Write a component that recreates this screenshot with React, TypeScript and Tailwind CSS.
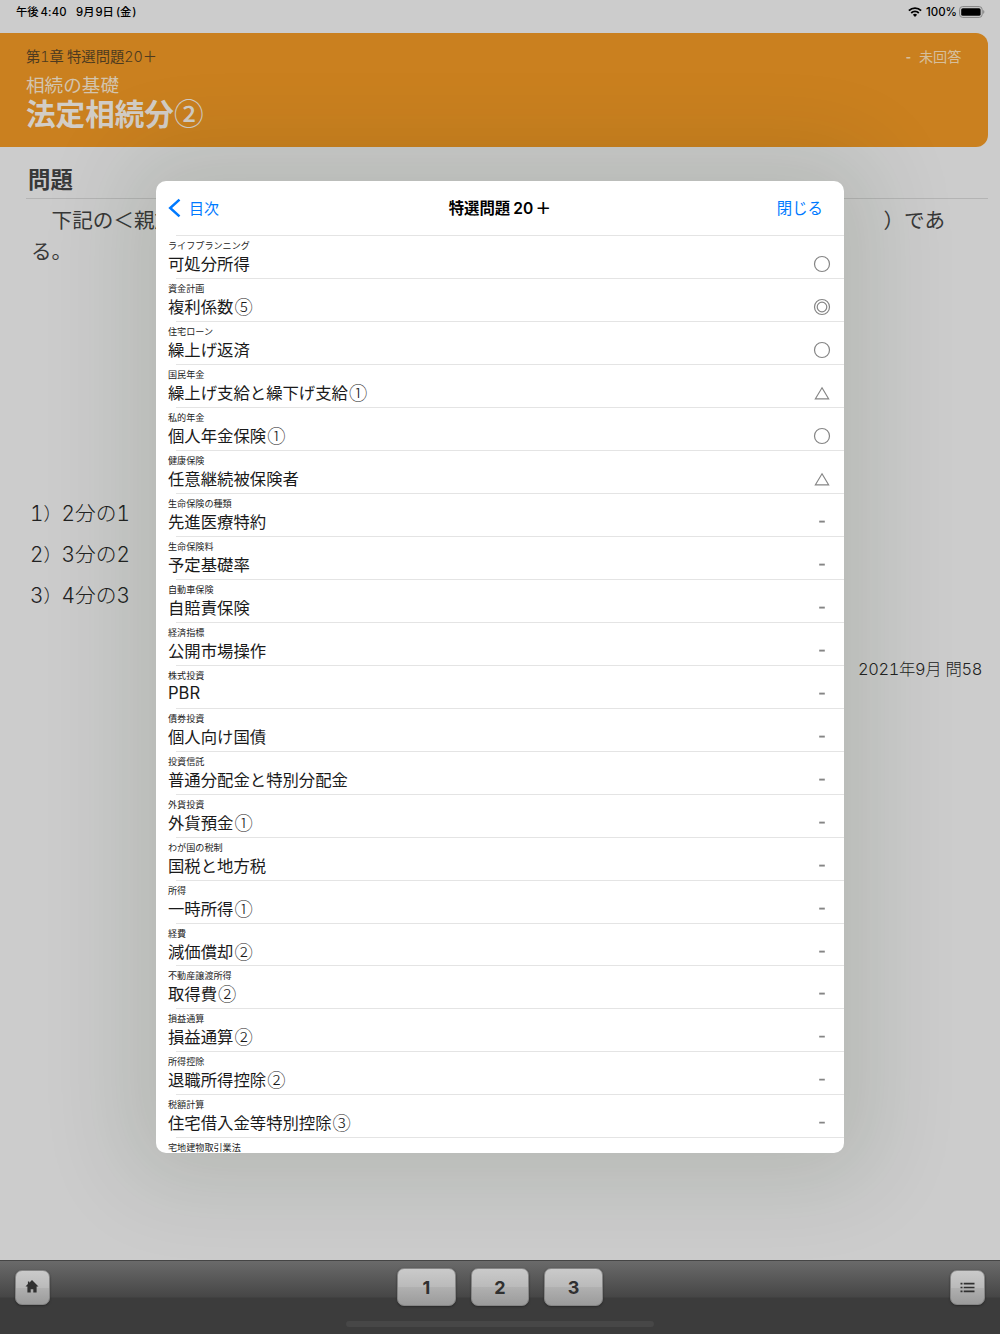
import React from 'react'
import clsx from 'clsx'

type Mark = 'good' | 'great' | 'fair' | 'none'

const rows: { category: string; title: string; no?: string; mark: Mark }[] = [
  { category: "ライフプランニング", title: "可処分所得", mark: "good" },
  { category: "資金計画", title: "複利係数", no: "⑤", mark: "great" },
  { category: "住宅ローン", title: "繰上げ返済", mark: "good" },
  { category: "国民年金", title: "繰上げ支給と繰下げ支給", no: "①", mark: "fair" },
  { category: "私的年金", title: "個人年金保険", no: "①", mark: "good" },
  { category: "健康保険", title: "任意継続被保険者", mark: "fair" },
  { category: "生命保険の種類", title: "先進医療特約", mark: "none" },
  { category: "生命保険料", title: "予定基礎率", mark: "none" },
  { category: "自動車保険", title: "自賠責保険", mark: "none" },
  { category: "経済指標", title: "公開市場操作", mark: "none" },
  { category: "株式投資", title: "PBR", mark: "none" },
  { category: "債券投資", title: "個人向け国債", mark: "none" },
  { category: "投資信託", title: "普通分配金と特別分配金", mark: "none" },
  { category: "外貨投資", title: "外貨預金", no: "①", mark: "none" },
  { category: "わが国の税制", title: "国税と地方税", mark: "none" },
  { category: "所得", title: "一時所得", no: "①", mark: "none" },
  { category: "経費", title: "減価償却", no: "②", mark: "none" },
  { category: "不動産譲渡所得", title: "取得費", no: "②", mark: "none" },
  { category: "損益通算", title: "損益通算", no: "②", mark: "none" },
  { category: "所得控除", title: "退職所得控除", no: "②", mark: "none" },
  { category: "税額計算", title: "住宅借入金等特別控除", no: "③", mark: "none" },
  { category: "宅地建物取引業法", title: "", mark: "none" },
];

function MarkIcon({ mark }: { mark: Mark }) {
  return (
    <svg className="h-[18px] w-[18px] shrink-0" viewBox="0 0 18 18" fill="none" stroke="#858585" strokeWidth="1.2">
      {(mark === 'good' || mark === 'great') && <circle cx="9" cy="9" r="7.5" />}
      {mark === 'great' && <circle cx="9" cy="9" r="4.8" />}
      {mark === 'fair' && <path d="M9 3.8L15.6 14.8H2.4Z" />}
      {mark === 'none' && <path d="M6.2 8.6H11.8" strokeWidth="1.9" />}
    </svg>
  );
}

function StatusBar() {
  return (
    <div className="flex h-[33px] items-start justify-between pl-4 pr-[15px] pt-[3px] text-[11.3px] leading-[17px] font-medium text-black">
      <div className="flex gap-[10px] whitespace-pre">
        <span className="w-[50px]">午後<span className="ml-[2px] font-['Inter'] tracking-[0.1px]">4:40</span></span>
        <span><span className="font-['Inter']">9</span>月<span className="ml-px font-['Inter']">9</span>日<span className="ml-[2px] font-['Inter']">(</span>金<span className="ml-px font-['Inter']">)</span></span>
      </div>
      <div className="flex items-center">
        <svg className="h-[10px] w-[14px]" viewBox="0 0 14 10">
          <path d="M0.9 3.6a8.7 8.7 0 0 1 12.2 0" fill="none" stroke="#000" strokeWidth="1.9" />
          <path d="M3.2 6a5.4 5.4 0 0 1 7.6 0" fill="none" stroke="#000" strokeWidth="1.8" />
          <path d="M7 10L4.9 7.8a3 3 0 0 1 4.2 0Z" />
        </svg>
        <span className="ml-[4px] pt-px font-['Inter'] text-[11.5px]">100%</span>
        <svg className="ml-[2px] h-[12px] w-[26px]" viewBox="0 0 26 12">
          <rect x="0.6" y="0.6" width="22.6" height="10.8" rx="3" fill="none" stroke="#858585" />
          <rect x="2.2" y="2.2" width="19.4" height="7.6" rx="1.6" />
          <path d="M24.2 4.1c1.6 .6 1.6 3.2 0 3.8Z" fill="#858585" />
        </svg>
      </div>
    </div>
  );
}

function ToolButton({ children, className }: { children: React.ReactNode; className?: string }) {
  return (
    <button className={clsx("flex items-center justify-center rounded-[7px] border border-[#858585] bg-[linear-gradient(#cacaca_0%,#bababa_50%,#b0b0b0_51%,#9b9b9b_100%)] text-[#303030] shadow-[0_1px_2px_#2a2a2a]", className)}>
      {children}
    </button>
  );
}

function Toolbar() {
  return (
    <div className="relative flex h-[74px] justify-between border-t border-[#454545] bg-[linear-gradient(#6a6a6a_0,#464646_36px,#3c3c3c_37px,#3c3c3c_100%)] px-[15px]">
      <ToolButton className="mt-[9px] h-[35px] w-[35px] pb-[2px] pr-px">
        <svg className="h-[13px] w-[14px]" viewBox="0 0 14 13" fill="currentColor">
          <path d="M7 0L13.5 6.4H11.6V12.4H8.3V9.2H5.7V12.4H2.4V6.4H0.5L2.9 4V1.4H4.3V2.7Z" />
        </svg>
      </ToolButton>
      <div className="mt-[7px] flex gap-[15px] font-['Inter'] text-[18px] font-bold">
        {[1, 2, 3].map(n => (
          <ToolButton key={n} className="h-[38px] w-[58.5px]">{n}</ToolButton>
        ))}
      </div>
      <ToolButton className="mt-[9px] h-[35px] w-[35px]">
        <svg className="h-[11px] w-[15px]" viewBox="0 0 15 11" stroke="currentColor" strokeWidth="1.7">
          <path d="M0.5 1.6H2.5M3.7 1.6H14.5M0.5 5.5H2.5M3.7 5.5H14.5M0.5 9.4H2.5M3.7 9.4H14.5" />
        </svg>
      </ToolButton>
      {/* home indicator */}
      <div className="absolute bottom-[7px] left-[346px] h-[6px] w-[308px] rounded-full bg-[#474747]" />
    </div>
  );
}

function ListModal() {
  return (
    <div className="absolute left-[156px] top-[181px] flex h-[972px] w-[688px] flex-col overflow-hidden rounded-[10px] bg-white shadow-[0_0_90px_28px_rgba(20,40,10,0.12)]">
      <div className="grid h-[54px] shrink-0 grid-cols-3 items-center pl-3 pr-[21px] text-[15px] text-[#007aff]">
        <div className="flex items-center gap-[8px]">
          <svg className="h-[20px] w-[13px]" viewBox="0 0 13 20" fill="none" stroke="currentColor" strokeWidth="2.5">
            <path d="M11.5 1.6L2.2 10L11.5 18.4" />
          </svg>
          <span>目次</span>
        </div>
        <h2 className="whitespace-nowrap pb-px pl-[9px] text-center text-[15.4px] font-bold text-black">特選問題<span className="ml-[3px] font-['Inter'] text-[15.6px] font-semibold">20</span><span className="ml-[2px] text-[16px]">＋</span></h2>
        <div className="text-right text-[15.4px]">閉じる</div>
      </div>
      <ul>
        {rows.map((row, index) => (
          <li key={index} className="h-[42.97px]">
            <div className="ml-[20px] h-px bg-[#e4e4e4]" />
            <div className="flex justify-between pl-3 pr-[13px]">
              <div className="whitespace-nowrap pt-[3px]">
                <div className="text-[9.1px] leading-[13px] text-[#222]">{row.category}</div>
                <div className={clsx("flex h-[22px] items-center leading-[22px] text-[#1a1a1a]", row.title === "PBR" ? "pt-px font-['Inter'] text-[16.6px]" : "text-[16.38px]")}>
                  {row.title}
                  {row.no && <span className="ml-px text-[18.3px] font-light">{row.no}</span>}
                </div>
              </div>
              <div className="pt-[19px]"><MarkIcon mark={row.mark} /></div>
            </div>
          </li>
        ))}
      </ul>
    </div>
  );
}

function App() {
  return (
    <div className="relative flex h-[1334px] w-[1000px] flex-col overflow-hidden bg-[#cccccc] font-['Noto_Sans_CJK_JP',sans-serif] text-[#383838]">
      <StatusBar />
      <header className="mr-[12.5px] flex h-[114px] justify-between rounded-r-[12px] bg-[#ca801f] pl-[26px] pr-[26px] pt-[13px]">
        <div>
          <div className="text-[14.3px] leading-[20px] text-[#4d3a20]">第<span className="font-['Inter'] font-light tabular-nums">1</span>章 特選問題<span className="font-['Inter'] font-light tabular-nums">20</span>＋</div>
          <div className="mt-[5px] text-[18.6px] leading-[24px] text-[#d3c4ae]">相続の基礎</div>
          <h1 className="text-[29.6px] leading-[34px] font-bold text-[#d2cdc6]">法定相続分<span className="font-medium">②</span></h1>
        </div>
        <div className="flex gap-[8px] text-[14.2px] leading-[20px] text-[#d6bf9c]"><span className="font-bold">-</span><span>未回答</span></div>
      </header>
      <main className="flex-1">
        <h2 className="ml-[26px] mr-3 h-[52px] border-b border-[#b4b4b4] pl-[2px] pt-[16px] text-[22.4px] leading-[30px] font-bold">問題</h2>
        <div className="flex justify-between pl-[31px] pr-[55px] pt-[5px] text-[20.6px] leading-[31px]">
          <p className="whitespace-nowrap">　下記の＜親族<br />る。</p>
          <p>）であ</p>
        </div>
        <ol className="mt-[227px] flex flex-col pl-[30px] font-['Inter','Noto_Sans_CJK_JP'] text-[20.8px] leading-[41px] tabular-nums">
          {["2分の1", "3分の2", "4分の3"].map((choice, index) => (
            <li key={index} className="flex whitespace-nowrap font-light text-[#222]">
              <span>{index + 1}</span><span className="text-[18px]">）</span><span>{choice}</span>
            </li>
          ))}
        </ol>
        <p className="mr-[18px] mt-[43px] text-right font-['Inter','Noto_Sans_CJK_JP'] text-[16.4px] leading-[20px] font-light tracking-[-0.35px] tabular-nums text-[#222]">2021年9月 問58</p>
      </main>
      <Toolbar />
      <ListModal />
    </div>
  );
}
export default App;
